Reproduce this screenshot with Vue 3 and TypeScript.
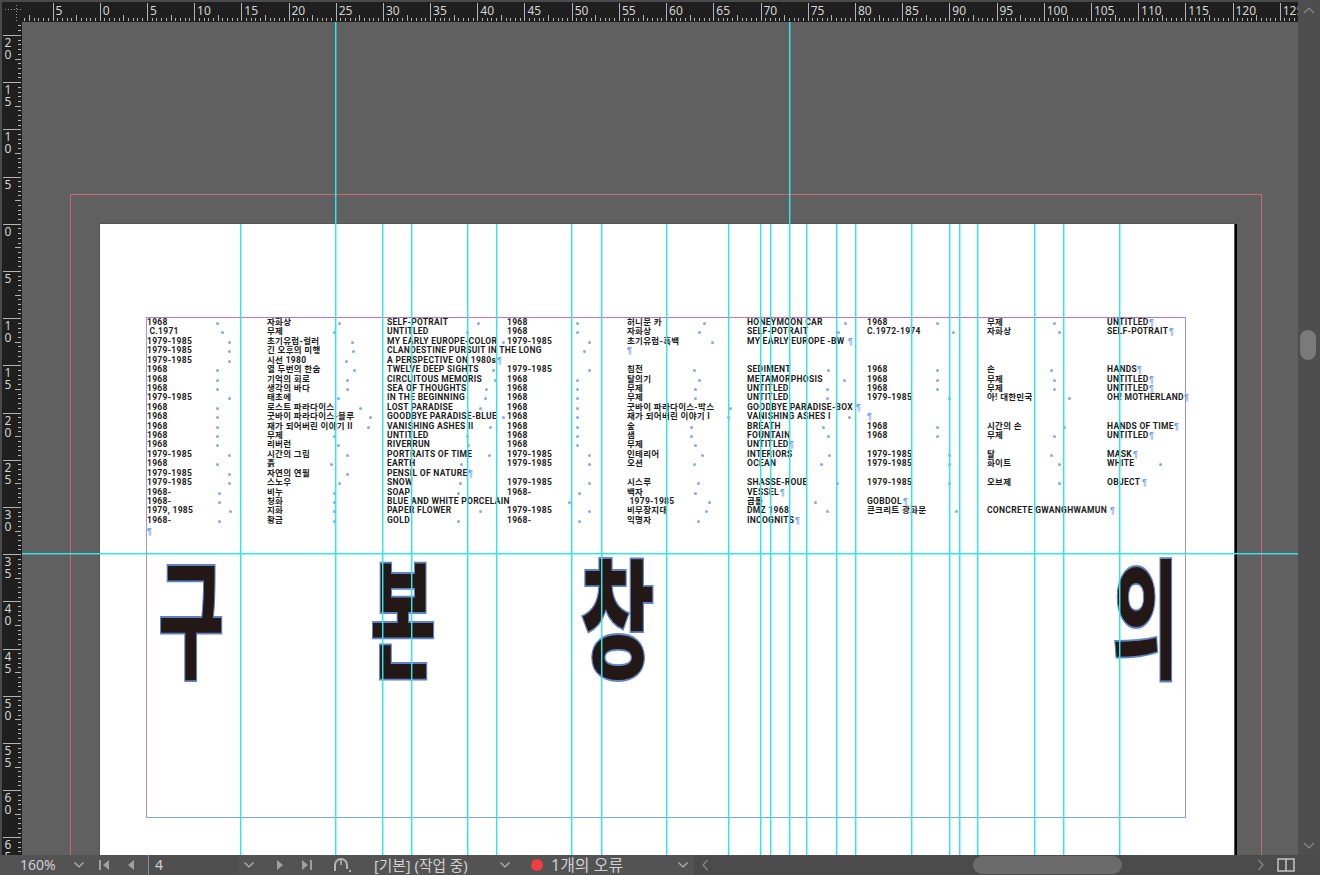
<script setup lang="ts">
type Cell = { t: string; x?: number; p?: boolean };

const UNIT = 9.44;
const ORIGIN_X = 99.7 - 22;
const ORIGIN_Y = 223.7 - 22;

const c = (t: string, x?: number): Cell => ({ t, x });
const p = (t: string, x?: number): Cell => ({ t, x, p: true });
const e: Cell = { t: '' };

const rows: Cell[][] = [
  [c('1968', 217), c('자화상', 339), c('SELF-POTRAIT', 478), c('1968', 577), c('허니문 카', 704), c('HONEYMOON CAR', 845), c('1968', 937), c('무제', 1054), p('UNTITLED', 1149)],
  [c(' C.1971', 222), c('무제', 334), c('UNTITLED', 467), c('1968', 577), c('자화상', 699), c('SELF-POTRAIT', 838), c('C.1972-1974', 953), c('자화상', 1059), p('SELF-POTRAIT', 1169)],
  [c('1979-1985', 229), c('초기유럽-컬러', 352), c('MY EARLY EUROPE-COLOR', 503), c('1979-1985', 589), c('초기유럽-흑백', 712), p('MY EARLY EUROPE -BW', 848), e, e, e],
  [c('1979-1985', 229), c('긴 오후의 미행', 353), c('CLANDESTINE PURSUIT IN THE LONG', 584), e, p('', 627), e, e, e, e],
  [c('1979-1985', 229), c('시선 1980', 346), p('A PERSPECTIVE ON 1980s', 497), e, e, e, e, e, e],
  [c('1968', 217), c('열 두번의 한숨', 354), c('TWELVE DEEP SIGHTS', 493), c('1979-1985', 589), c('침전', 694), c('SEDIMENT', 828), c('1968', 937), c('손', 1051), p('HANDS', 1137)],
  [c('1968', 217), c('기억의 회로', 347), c('CIRCUITOUS MEMORIS', 495), c('1968', 577), c('탈의기', 699), c('METAMORPHOSIS', 844), c('1968', 937), c('무제', 1054), p('UNTITLED', 1149)],
  [c('1968', 217), c('생각의 바다', 347), c('SEA OF THOUGHTS', 486), c('1968', 577), c('무제', 695), c('UNTITLED', 827), c('1968', 937), c('무제', 1054), p('UNTITLED', 1149)],
  [c('1979-1985', 229), c('태초에', 338), c('IN THE BEGINNING', 485), c('1968', 577), c('무제', 695), c('UNTITLED', 827), c('1979-1985', 949), c('아! 대한민국', 1069), p('OH! MOTHERLAND', 1184)],
  [c('1968', 217), c('로스트 파라다이스', 360), c('LOST PARADISE', 480), c('1968', 577), c('굿바이 파라다이스-박스', 730), p('GOODBYE PARADISE-BOX', 856), e, e, e],
  [c('1968', 217), c('굿바이 파라다이스-블루', 370), c('GOODBYE PARADISE-BLUE', 503), c('1968', 577), c('재가 되어버린 이야기 I', 728), c('VANISHING ASHES I', 849), p('', 867), e, e],
  [c('1968', 217), c('재가 되어버린 이야기 II', 368), c('VANISHING ASHES II', 490), c('1968', 577), c('숲', 691), c('BREATH', 823), c('1968', 937), c('시간의 손', 1064), p('HANDS OF TIME', 1174)],
  [c('1968', 217), c('무제', 334), c('UNTITLED', 467), c('1968', 577), c('샘', 691), c('FOUNTAIN', 828), c('1968', 937), c('무제', 1054), p('UNTITLED', 1149)],
  [c('1968', 217), c('리버런', 338), c('RIVERRUN', 468), c('1968', 577), c('무제', 695), p('UNTITLED', 789), e, e, e],
  [c('1979-1985', 229), c('시간의 그림', 347), c('PORTRAITS OF TIME', 489), c('1979-1985', 589), c('인테리어', 702), c('INTERIORS', 829), c('1979-1985', 949), c('탈', 1051), p('MASK', 1133)],
  [c('1968', 217), c('흙', 331), c('EARTH', 461), c('1979-1985', 589), c('오션', 694), c('OCEAN', 821), c('1979-1985', 949), c('화이트', 1059), c('WHITE', 1160)],
  [c('1979-1985', 229), c('자연의 연필', 347), p('PENSIL OF NATURE', 468), e, e, e, e, e, e],
  [c('1979-1985', 229), c('스노우', 339), c('SNOW', 460), c('1979-1985', 589), c('시스루', 698), c('SHASSE-ROUE', 837), c('1979-1985', 949), c('오브제', 1059), p('OBJECT', 1142)],
  [c('1968-', 219), c('비누', 334), c('SOAP', 458), c('1968-', 579), c('백자', 695), p('VESSEL', 780), e, e, e],
  [c('1968-', 219), c('청화', 334), c('BLUE AND WHITE PORCELAIN', 569), e, c(' 1979-1985', 709), c('곱돌', 815), p('GOBDOL', 903), e, e],
  [c('1979, 1985', 230), c('지화', 334), c('PAPER FLOWER', 480), c('1979-1985', 589), c('비무장지대', 706), c('DMZ 1968', 827), c('콘크리트 광화문', 956), p('CONCRETE GWANGHWAMUN', 1110), e],
  [c('1968-', 219), c('황금', 334), c('GOLD', 458), c('1968-', 579), c('익명자', 698), p('INCOGNITS', 795), e, e, e],
];

const colX = (i: number) => 147 + i * 120;

const pageGuides = [240, 382, 411, 467, 496, 571, 601, 666, 728, 760, 770, 806, 836, 855, 911, 949, 959, 977, 1034, 1063, 1119];
const longGuides = [335, 789];

// half-unit ticks, snapped so they stay one pixel wide
const hTicks: { x: number; h: number }[] = [];
for (let i = -16; i < 260; i++) {
  const x = Math.round(ORIGIN_X + i * UNIT * 0.5) + 0.5;
  if (x < 0 || x > 1276) continue;
  hTicks.push({ x, h: i % 10 === 0 ? 18 : i % 5 === 0 ? 6 : 3 });
}
const hLabels: { x: number; t: string }[] = [];
for (let v = -5; v <= 125; v += 5) hLabels.push({ x: ORIGIN_X + v * UNIT, t: String(Math.abs(v)) });

const vTicks: { y: number; w: number }[] = [];
for (let i = -46; i < 140; i++) {
  const y = Math.round(ORIGIN_Y + i * UNIT * 0.5) + 0.5;
  if (y < 0 || y > 833) continue;
  vTicks.push({ y, w: i % 10 === 0 ? 18 : i % 5 === 0 ? 6 : 3 });
}
const vLabels: { y: number; d: string[] }[] = [];
for (let v = -20; v <= 65; v += 5) vLabels.push({ y: ORIGIN_Y + v * UNIT, d: String(Math.abs(v)).split('') });
</script>

<template>
  <div class="app">
    <div class="corner">
      <svg width="22" height="22"><path d="M3 7.5h17M14.5 3v17" stroke="#999" stroke-dasharray="1 2" fill="none" /></svg>
    </div>
    <div class="ruler-top">
      <svg width="1276" height="22">
        <line v-for="t in hTicks" :key="t.x" :x1="t.x" :x2="t.x" :y1="21" :y2="21 - t.h" stroke="#b4b4b4" />
        <text v-for="l in hLabels" :key="l.x" :x="l.x + 3" y="15" class="ruler-num">{{ l.t }}</text>
      </svg>
    </div>
    <div class="scroll-v">
      <svg class="arrow" width="22" height="20"><path d="M6 13l5-5 5 5" /></svg>
      <div class="thumb-v"></div>
      <svg class="arrow" width="22" height="20"><path d="M6 8l5 5 5-5" /></svg>
    </div>
    <div class="ruler-left">
      <svg width="22" height="833">
        <line v-for="t in vTicks" :key="t.y" :y1="t.y" :y2="t.y" :x1="21" :x2="21 - t.w" stroke="#b4b4b4" />
        <g v-for="l in vLabels" :key="l.y">
          <text v-for="(d, i) in l.d" :key="i" x="8" :y="l.y + 12 + i * 12" class="ruler-num" text-anchor="middle">{{ d }}</text>
        </g>
      </svg>
    </div>

    <div class="canvas">
      <div class="bleed"></div>
      <div class="page">
        <div class="margins"></div>
        <div class="frame">
          <div class="table">
            <template v-for="(row, r) in rows" :key="r">
              <div v-for="(cell, i) in row" :key="i" class="cell">
                {{ cell.t }}
                <span
                  v-if="cell.x"
                  :class="cell.p ? 'pil' : 'dot'"
                  :style="{ left: cell.x - colX(i) + 'px' }"
                >{{ cell.p ? '¶' : '' }}</span>
              </div>
            </template>
          </div>
          <div class="end-mark">¶</div>
          <div class="title">
            <span>구</span>
            <span>본</span>
            <span class="wide">창</span>
            <span>의</span>
          </div>
        </div>
        <div v-for="g in pageGuides" :key="g" class="guide" :style="{ left: g - 100 + 'px' }"></div>
      </div>
      <div v-for="g in longGuides" :key="g" class="guide-long" :style="{ left: g - 22 + 'px' }"></div>
      <div class="guide-h"></div>
    </div>

    <div class="status">
      <div class="st-left">
        <span class="zoom-val">160%</span>
        <svg class="chev" width="12" height="8"><path d="M1.5 1.5L6 6l4.5-4.5" /></svg>
        <svg class="nav nav-first" width="12" height="12"><path d="M1 1h2v10H1zM11 1v10L5 6z" /></svg>
        <svg class="nav nav-prev" width="8" height="12"><path d="M7 1v10L1 6z" /></svg>
        <div class="page-field">4</div>
        <svg class="chev field-chev" width="12" height="8"><path d="M1.5 1.5L6 6l4.5-4.5" /></svg>
        <svg class="nav nav-next" width="8" height="12"><path d="M1 1v10l6-5z" /></svg>
        <svg class="nav nav-last" width="12" height="12"><path d="M1 1v10l6-5zM9 1h2v10H9z" /></svg>
        <svg class="pre" width="20" height="18" fill="none" stroke="#b5b5b5" stroke-width="2">
          <path d="M3 15V9a6 6 0 0 1 12 0v4" />
          <path d="M9 4v5" stroke-width="1.5" />
          <path d="M17 15h2" />
        </svg>
        <span class="workspace">[기본] (작업 중)</span>
        <svg class="chev" width="12" height="8"><path d="M1.5 1.5L6 6l4.5-4.5" /></svg>
        <i class="err-dot"></i>
        <span class="err">1개의 오류</span>
        <svg class="chev" width="12" height="8"><path d="M1.5 1.5L6 6l4.5-4.5" /></svg>
      </div>
      <div class="st-right">
        <svg class="sarrow" width="8" height="14"><path d="M6.5 2L2 7l4.5 5" /></svg>
        <div class="track"><div class="thumb-h"></div></div>
        <svg class="sarrow" width="8" height="14"><path d="M1.5 2L6 7l-4.5 5" /></svg>
        <svg class="split" width="18" height="14" fill="none" stroke="#c4c4c4" stroke-width="1.5"><rect x="1" y="1" width="16" height="12" /><path d="M9 1v12" /></svg>
      </div>
    </div>
  </div>
</template>

<style scoped>
.app {
  position: relative;
  width: 1320px;
  height: 875px;
  overflow: hidden;
  display: grid;
  grid-template-columns: 22px 1276px 22px;
  grid-template-rows: 22px 833px 20px;
  background: #606060;
  font-family: 'Noto Sans', 'Noto Sans CJK KR', sans-serif;
}

.corner,
.ruler-top,
.ruler-left {
  background: #1f1f1f;
  overflow: hidden;
}

.corner {
  border-top: 2px solid #4a4a4a;
  border-left: 2px solid #4a4a4a;
  box-sizing: border-box;
}

.ruler-top {
  box-shadow: inset 0 2px 0 #4a4a4a;
}

.ruler-left {
  box-shadow: inset 2px 0 0 #4a4a4a;
}

.ruler-top svg,
.ruler-left svg {
  display: block;
}

.ruler-num {
  font-family: 'Noto Sans', sans-serif;
  font-size: 12px;
  fill: #d4d4d4;
}

.scroll-v {
  grid-row: 1 / 3;
  grid-column: 3;
  background: #4e4e4e;
  display: flex;
  flex-direction: column;
  align-items: center;
  justify-content: space-between;
  position: relative;
}

.arrow path {
  fill: none;
  stroke: #8a8a8a;
  stroke-width: 1.2;
}

.thumb-v {
  position: absolute;
  top: 330px;
  left: 2px;
  width: 16px;
  height: 30px;
  border-radius: 8px;
  background: #7a7a7a;
}

.canvas {
  position: relative;
  overflow: hidden;
  background: #606060;
}

.bleed {
  position: absolute;
  left: 48px;
  top: 172px;
  width: 1190px;
  height: 800px;
  border: 1px solid #c56a78;
}

.page {
  position: absolute;
  left: 78px;
  top: 202px;
  width: 1134px;
  height: 760px;
  background: #fff;
  box-shadow: 3px 0 0 #000;
  outline: 1px solid #555;
}

.margins {
  position: absolute;
  left: 46px;
  top: 93px;
  width: 1038px;
  height: 499px;
  border: 1px solid #9a96dc;
  border-top-color: #b878b4;
  border-bottom-color: #7fa4dc;
}

.frame {
  position: absolute;
  left: 47px;
  top: 94px;
  width: 1038px;
}

.table {
  display: grid;
  grid-template-columns: repeat(9, 120px);
  grid-auto-rows: 9.43px;
  font-family: Roboto, 'Noto Sans CJK KR', sans-serif;
  font-size: 8.5px;
  line-height: 9.43px;
  font-weight: 700;
  letter-spacing: 0.3px;
  color: #1c1c1c;
}

.cell {
  position: relative;
  white-space: pre;
}

.dot {
  position: absolute;
  top: 4px;
  width: 3px;
  height: 3px;
  margin-left: -1.5px;
  border-radius: 50%;
  background: #84a8ee;
}

.pil {
  position: absolute;
  top: 0;
  font-family: 'Liberation Sans', sans-serif;
  font-weight: 700;
  color: #6f9bee;
}

.end-mark {
  height: 13px;
  line-height: 13px;
  font-family: 'Liberation Sans', sans-serif;
  font-size: 8.5px;
  font-weight: 700;
  color: #6f9bee;
}

.title {
  display: grid;
  grid-template-columns: 212px 210px 532px auto;
  padding-left: 11px;
  margin-top: 9px;
  font-family: 'Noto Sans CJK KR', sans-serif;
  font-size: 72px;
  font-weight: 900;
  line-height: 72px;
  color: #231815;
  -webkit-text-stroke: 1px #5f83c4;
}

.title span {
  display: block;
  transform: scaleY(1.8);
  transform-origin: top left;
}

.title .wide {
  transform: scale(1.13, 1.8);
}

.guide,
.guide-long {
  position: absolute;
  width: 1px;
  background: #2fe6ea;
  box-shadow: 1px 0 0 rgba(47, 230, 234, 0.45);
}

.guide {
  top: 0;
  bottom: 0;
}

.guide-long {
  top: 0;
  height: 833px;
}

.guide-h {
  position: absolute;
  left: 0;
  right: 0;
  top: 531px;
  height: 1px;
  background: #2fe6ea;
  box-shadow: 0 1px 0 rgba(47, 230, 234, 0.45);
}

.status {
  grid-column: 1 / 4;
  display: flex;
  background: #535353;
  color: #d0d0d0;
  font-size: 14px;
  line-height: 20px;
  height: 20px;
}

.st-left {
  width: 694px;
  display: flex;
  align-items: center;
  padding-left: 20px;
  box-sizing: border-box;
}

.zoom-val {
  width: 53px;
}

.chev path {
  fill: none;
  stroke: #b5b5b5;
  stroke-width: 1.2;
}

.nav path {
  fill: #a0a0a0;
}

.nav-first {
  margin-left: 13px;
}

.nav-prev {
  margin-left: 17px;
}

.page-field {
  margin-left: 13px;
  width: 90px;
  height: 20px;
  padding-left: 6px;
  box-sizing: border-box;
  background: #4f4f4f;
  border-left: 1px solid #8a8a8a;
}

.field-chev {
  margin-left: 5px;
}

.nav-next {
  margin-left: 21px;
}

.nav-last {
  margin-left: 17px;
}

.pre {
  margin-left: 19px;
}

.workspace {
  margin-left: 22px;
  width: 125px;
  font-size: 14.7px;
}

.err-dot {
  width: 12px;
  height: 12px;
  margin-left: 20px;
  border-radius: 50%;
  background: #ef3e42;
}

.err {
  margin-left: 8px;
  width: 126px;
  font-size: 16px;
}

.st-right {
  flex: 1;
  display: flex;
  align-items: center;
  background: #4b4b4b;
  margin-top: -1px;
  height: 21px;
  padding-left: 7px;
}

.sarrow path {
  fill: none;
  stroke: #8a8a8a;
  stroke-width: 1.2;
}

.track {
  width: 545px;
  height: 21px;
  margin-left: 3px;
  display: flex;
  align-items: center;
}

.thumb-h {
  width: 149px;
  height: 18px;
  margin-left: 261px;
  border-radius: 9px;
  background: #6b6b6b;
}

.split {
  margin-left: 12px;
}
</style>

<style>
body {
  background: #606060;
}
</style>
